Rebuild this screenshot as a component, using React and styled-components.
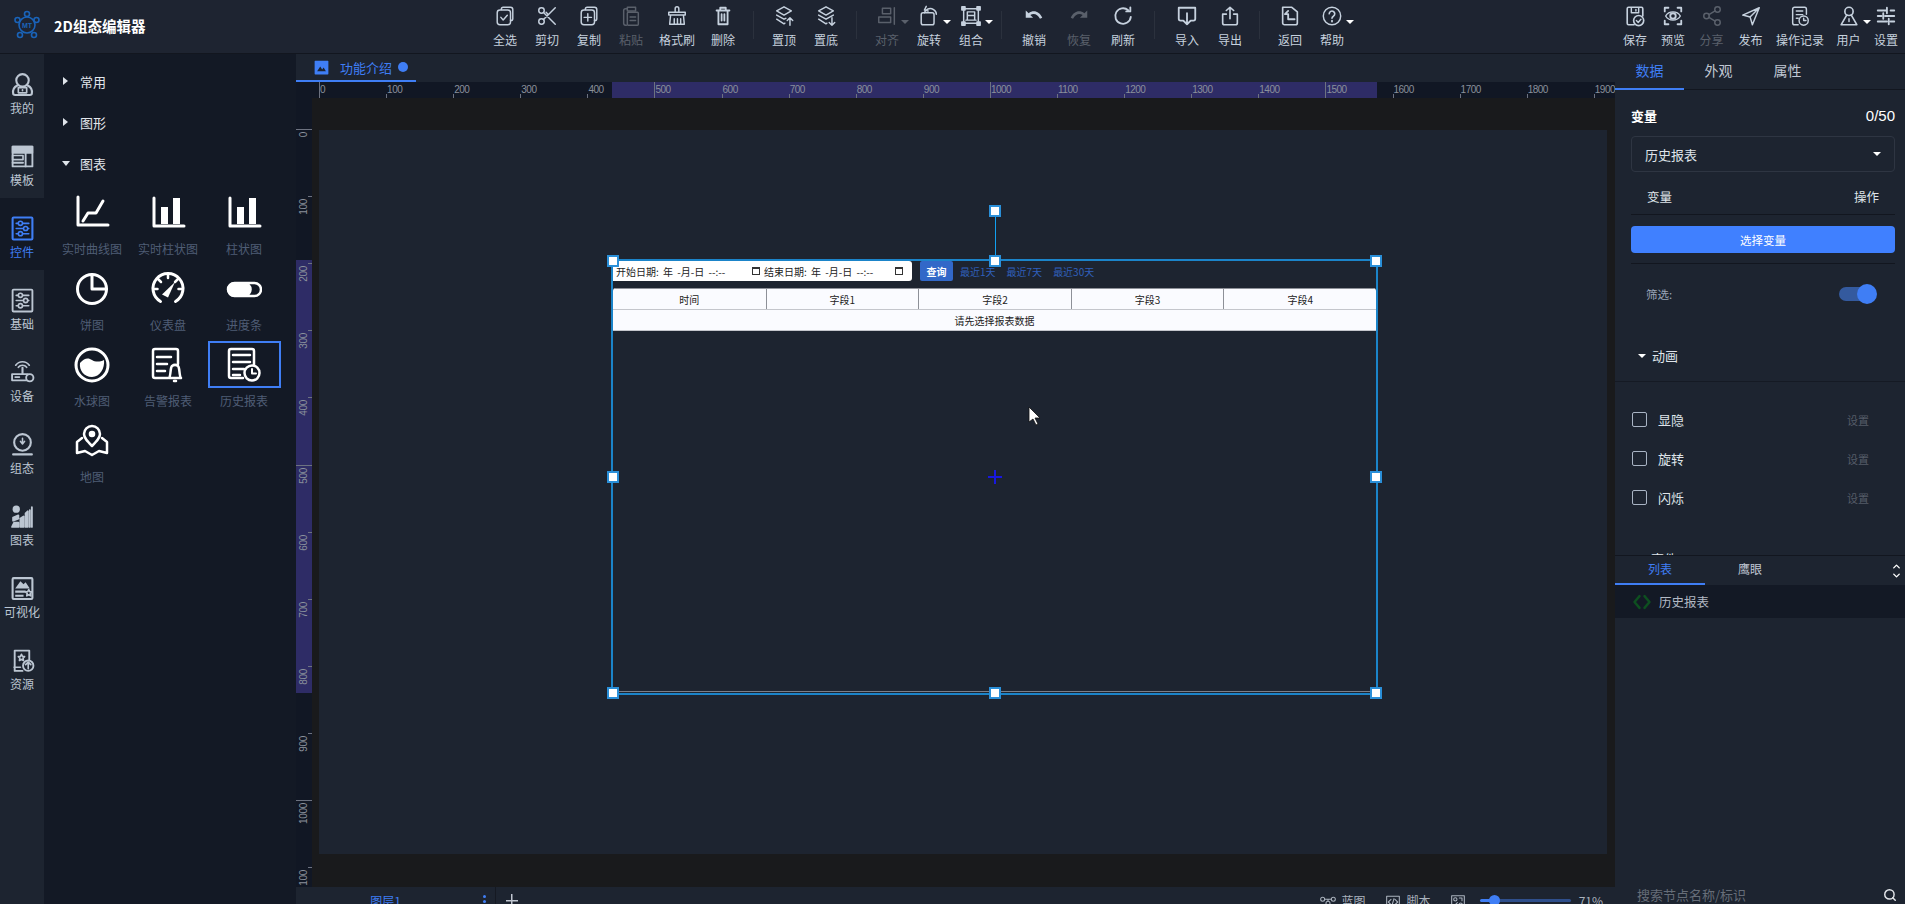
import React from "react";
import styled, { createGlobalStyle } from "styled-components";
import { Search, ChevronUp, ChevronDown } from "lucide-react";

const FONT = `"Noto Sans CJK SC", "Noto Sans", sans-serif`;
const BLUE = "#3f7ef5";
const BG = "#1d2430";
const STEP = 67.1;

const GlobalStyle = createGlobalStyle`
  html, body { margin: 0; padding: 0; height: 904px; overflow: hidden; background: ${BG}; }
  body { font-family: ${FONT}; }
  * { box-sizing: border-box; }
`;

// all the drawn icons, 24x24 box, stroke = currentColor unless filled
const P = {
  selectAll: <><path d="M8 5V4.500a2 2 0 0 1 2-2h8a2.500 2.500 0 0 1 2.500 2.500v10a2 2 0 0 1-2 2H18" /><rect x="3.500" y="5.500" width="14.500" height="16" rx="3" /><path d="M7.500 13.500l2.500 2.800 4.500-5" /></>,
  cut: <><circle cx="6" cy="6" r="3" /><circle cx="6" cy="18" r="3" /><path d="M8.200 8.200L21 21M8.200 15.800L21 3M11 8l2 2M14 14l2 2" /></>,
  copyAdd: <><path d="M8 5V4.500a2 2 0 0 1 2-2h8a2.500 2.500 0 0 1 2.500 2.500v10a2 2 0 0 1-2 2H18" /><rect x="3.500" y="5.500" width="14.500" height="16" rx="3" /><path d="M10.700 9.500v8M6.700 13.500h8" /></>,
  paste: <><path d="M8 4H6a2 2 0 0 0-2 2v14a2 2 0 0 0 2 2h1" /><rect x="8" y="2.500" width="9" height="4" /><rect x="8" y="8" width="12" height="14" rx="1" /><path d="M11 13h6M11 17h6" /></>,
  brush: <><path d="M10 7V4a2 2 0 0 1 4 0v3" /><path d="M3 8h18v3H3zM5 11l-1 10h16l-1-10" /><path d="M9 21v-6M12.500 21v-6M16 21v-6" /></>,
  trash: <><path d="M5 6h14M9 6V3h6v3M7 6v15h10V6" strokeWidth="2" /><path d="M10.500 10v7M13.500 10v7" strokeWidth="2" /></>,
  top: <><path d="M12 2l8 4.500-8 4.500-8-4.500z" /><path d="M4 11l8 4.500 2-1M4 15.500l8 5 1-.6" /><path d="M18.500 22v-8M15.500 17l3-3 3 3" /></>,
  bottom: <><path d="M12 2l8 4.500-8 4.500-8-4.500z" /><path d="M20 11l-8 4.500-8-4.500M4 15.500l8 5 1-.6" /><path d="M18.500 14v8M15.500 19l3 3 3-3" /></>,
  align: <><path d="M20 3v18" /><rect x="7" y="3.500" width="9" height="6" /><rect x="3" y="13" width="13" height="6" /></>,
  rotate: <><rect x="3.500" y="8.500" width="14" height="13" rx="2" /><path d="M7 8.500c1-4 6-6 10-3.500 2 1.200 3 3 3 5M9 1.500l-2 4 4 1" /></>,
  group: <><rect x="4" y="4" width="16" height="16" /><rect x="2" y="2" width="3.500" height="3.500" fill="currentColor" /><rect x="18.500" y="2" width="3.500" height="3.500" fill="currentColor" /><rect x="2" y="18.500" width="3.500" height="3.500" fill="currentColor" /><rect x="18.500" y="18.500" width="3.500" height="3.500" fill="currentColor" /><path d="M8 7.500h8v4H8zM8 11.500v5M16 11.500v5M6.500 16.500h11" /></>,
  undo: <path stroke="none" fill="currentColor" d="M3 6v8h8l-3-3c3.500-2.500 8-1 10.500 4l2.500-1.200C18 6.800 11.200 4.800 6.200 9z" />,
  redo: <path stroke="none" fill="currentColor" d="M21 6v8h-8l3-3c-3.500-2.500-8-1-10.500 4L3 13.800C6 6.800 12.800 4.800 17.800 9z" />,
  refresh: <><path d="M20.500 13a8.500 8.500 0 1 1-2.800-7.300" strokeWidth="2" /><path d="M20 2.500V7h-4.500" strokeWidth="2" /></>,
  importIt: <><path d="M8 17H5a2 2 0 0 1-2-2V3h18v12a2 2 0 0 1-2 2h-3" strokeWidth="2" /><path d="M12 9v12M8.500 17.500l3.500 3.500 3.500-3.500" strokeWidth="2" /></>,
  exportIt: <><path d="M8 10H4v9.500a2 2 0 0 0 2 2h12a2 2 0 0 0 2-2V10h-4" strokeWidth="1.800" /><path d="M12 15V2.500M8 6l4-3.500L16 6" strokeWidth="1.800" /></>,
  back: <><path d="M4 2.500h10l6 5v12a2 2 0 0 1-2 2H6a2 2 0 0 1-2-2z" strokeWidth="1.800" /><path d="M10 6.500l-3.500 3.500H10v5.500h7" strokeWidth="2" /></>,
  help: <><circle cx="12" cy="12" r="9.500" /><path d="M9 9.500a3 3 0 1 1 4.500 2.700c-1 .6-1.500 1.200-1.500 2.300" strokeWidth="1.800" /><path d="M12 17v1" strokeWidth="2" /></>,
  save: <><path d="M5 2.500h14a1.500 1.500 0 0 1 1.500 1.500v8M11 21.500H5A1.500 1.500 0 0 1 3.500 20V4A1.500 1.500 0 0 1 5 2.500" strokeWidth="1.800" /><path d="M8 3v5.500h8V3M13 5v1.500" /><circle cx="16" cy="17" r="5.500" strokeWidth="1.800" /><path d="M13.500 17l2 2 3-3.500" /></>,
  preview: <><path d="M3 7V3h4M17 3h4v4M21 17v4h-4M7 21H3v-4" strokeWidth="2" /><path d="M4 12c3.500-6 12.500-6 16 0-3.500 6-12.500 6-16 0z" /><circle cx="12" cy="12" r="3" strokeWidth="2" /></>,
  share: <><circle cx="18" cy="5" r="3" /><circle cx="6" cy="12" r="3" /><circle cx="18" cy="19" r="3" /><path d="M8.600 10.500l6.800-4M8.600 13.500l6.800 4" /></>,
  send: <path d="M21 3L3 11l8 2 2.500 8.500zM21 3L11 13" />,
  log: <><path d="M10 21.500H6a2 2 0 0 1-2-2v-15a2 2 0 0 1 2-2h11a2 2 0 0 1 2 2V10" /><path d="M8 6.500h7M8 10.500h7M8 14.500h2" /><circle cx="16" cy="17" r="5" /><path d="M16 14.500V17h2.500" /></>,
  user: <><circle cx="12" cy="7" r="4.500" strokeWidth="1.800" /><path d="M9.500 11L3.500 21.500h17L14.500 11" strokeWidth="1.800" /><path d="M12 15v3" /></>,
  settings: <path d="M3 6h10M17 6h4M13 3v6M3 12h4M11 12h10M9 9v6M3 18h10M17 18h4M15 15v6" strokeWidth="2" />,

  rMine: <><circle cx="12" cy="8" r="6" strokeWidth="2" /><path d="M7 13c-3 1.500-4.500 4-4 7.500 0 1 1 1.500 2 1.500h14c1 0 2-.5 2-1.500.5-3.500-1-6-4-7.500" strokeWidth="2" /><rect x="8" y="15" width="8" height="5" /><path d="M12 17v1" /></>,
  rTemplate: <><rect x="2.500" y="2.500" width="19" height="19" strokeWidth="1.800" /><rect x="2.500" y="2.500" width="19" height="6" fill="currentColor" /><rect x="2.500" y="11" width="10" height="4" /><path d="M2.500 18h10M15 8.500v13" strokeWidth="1.800" /></>,
  rControl: <><rect x="2.500" y="1.500" width="19" height="21" rx="1" strokeWidth="2" /><path d="M6 7h12M6 12h12M6 17h12" /><circle cx="10" cy="7" r="2" fill="#131925" strokeWidth="1.500" /><circle cx="15" cy="12" r="2" fill="#131925" strokeWidth="1.500" /><circle cx="10" cy="17" r="2" fill="#131925" strokeWidth="1.500" /></>,
  rBasic: <><rect x="2.500" y="1.500" width="19" height="21" rx="1" strokeWidth="1.800" /><path d="M6 7h12M6 12h12M6 17h12" /><circle cx="10" cy="7" r="2" fill={BG} /><circle cx="15" cy="12" r="2" fill={BG} /><circle cx="10" cy="17" r="2" fill={BG} /></>,
  rDevice: <><path d="M8 7a5 5 0 0 1 8 0M5.500 5a8 8 0 0 1 13 0" /><path d="M12 7.500v6" strokeWidth="2" /><rect x="2" y="13.500" width="15" height="6" strokeWidth="1.800" /><circle cx="19" cy="17" r="3.500" fill={BG} strokeWidth="1.800" /><path d="M5 16.500h4" /></>,
  rConfig: <><circle cx="12" cy="10" r="8" strokeWidth="2" /><path d="M12 6v5M10 9l2 2.500L14 9" strokeWidth="1.500" /><path d="M3 21.500h18" strokeWidth="2" /></>,
  rChart: <><circle cx="6" cy="5" r="3.500" fill="currentColor" stroke="none" /><path d="M3 13l5-2v3l-5 2zM2 22l2-4h4v4zM10 22v-8l3-2v10zM15 22V9l2-2v15zM19 22V6M21 22V3" strokeWidth="1.800" fill="currentColor" /></>,
  rVisual: <><rect x="2.500" y="2" width="19" height="20" rx="1" strokeWidth="2" /><path stroke="none" fill="currentColor" d="M5 12l5-7 3 3 2-2 4 6zM5 14h10v2H5zM5 18h8v2H5z" /><path d="M18 13l1 2 2 .3-1.500 1.500.4 2.200-1.900-1-1.900 1 .4-2.200L15 15.300l2-.3z" fill={BG} /></>,
  rResource: <><path d="M12 22H4.500V2.500h14V11" strokeWidth="1.800" /><path d="M4 18.500h6" /><path d="M11 6l1 2 2 .3-1.500 1.500.4 2.200-1.900-1-1.900 1 .4-2.200L8 8.300l2-.3z" /><circle cx="17.500" cy="17" r="5" strokeWidth="1.800" /><path d="M17.500 20v-6M15 16l2.500-2.500L20 16" /></>,

  wLine: <path d="M4 2v28h30M9 26l5-8h8l7-12M8 31" strokeWidth="3" />,
  wRealBar: <><path d="M4 3v28h30" strokeWidth="3" /><rect x="11" y="12" width="7" height="17" fill="currentColor" stroke="none" /><rect x="23" y="3" width="7" height="26" fill="currentColor" stroke="none" /></>,
  wBar: <><path d="M4 3v28h30" strokeWidth="3" /><rect x="11" y="12" width="7" height="17" fill="currentColor" stroke="none" /><rect x="23" y="3" width="7" height="26" fill="currentColor" stroke="none" /></>,
  wPie: <><path d="M18 3.500a14.500 14.500 0 1 0 14.500 14.500H18z" strokeWidth="3" /><path d="M18 3.500a14.500 14.500 0 0 1 14.500 14.500" strokeWidth="3" /></>,
  wGauge: <><path d="M10.500 30.500a15 15 0 1 1 15 0" strokeWidth="3" /><path d="M18 3v4M3.500 18h4M28.500 18h4M8 8l3 3M28 8l-3 3" strokeWidth="2.500" /><path d="M12 23.500L25 11l-7 15.500z" fill="currentColor" stroke="none" /></>,
  wToggle: <><rect x="2" y="12" width="33" height="13" rx="6.500" strokeWidth="2.500" /><rect x="2" y="12" width="23" height="13" rx="6.500" fill="currentColor" /></>,
  wLiquid: <><circle cx="18" cy="18" r="16" strokeWidth="3" /><path stroke="none" fill="currentColor" d="M6 16c5-6 9-5 12-3s8 2 12 0c1 8-4 17-12 17S5 23 6 16z" /></>,
  wAlarm: <><path d="M18 31H5a2 2 0 0 1-2-2V4a2 2 0 0 1 2-2h21a2 2 0 0 1 2 2v13" strokeWidth="2.500" /><path d="M7 10h14M7 17h10M7 24h8" strokeWidth="2.500" /><path d="M19 31c2-2 1-10 3-12a5 5 0 0 1 6 0c2 2 1 10 3 12zM24 34h2" strokeWidth="2.500" /></>,
  wHistory: <><path d="M17 31H5a2 2 0 0 1-2-2V4a2 2 0 0 1 2-2h21a2 2 0 0 1 2 2v14" strokeWidth="2.500" /><path d="M7 8h17M7 15h17M7 22h11M7 28h7" strokeWidth="2.500" /><circle cx="26" cy="26" r="7.500" strokeWidth="2.500" /><path d="M26 22v4.500h4" strokeWidth="2" /></>,
  wMap: <><path d="M18 23c-5-5-8-8-8-12a8 8 0 0 1 16 0c0 4-3 7-8 12z" strokeWidth="2.500" /><circle cx="18" cy="11" r="2.500" fill="currentColor" /><path d="M8 15l-5 4v11l8-2 7 4 7-4 8 2V19l-5-4" strokeWidth="2.500" /></>,

  blueprint: <><circle cx="4" cy="8" r="3" /><circle cx="20" cy="8" r="3" /><circle cx="12" cy="14" r="3" /><path d="M7 8h10M12 8v3" /></>,
  script: <><rect x="2.500" y="3.500" width="19" height="17" /><path d="M9 8l-4 4 4 4M15 8l4 4-4 4M13.500 7l-3 10" /></>,
  fit: <><rect x="2.500" y="2.500" width="19" height="19" /><circle cx="8" cy="8" r="2.500" /><circle cx="16" cy="16" r="2.500" /><path d="M11 13l-5 5M14 6h4v4" /></>,
  code: <path d="M9 5l-6 7 6 7M15 5l6 7-6 7M9 5" strokeWidth="3" />,
  tabPic: <path stroke="none" fill="currentColor" fillRule="evenodd" d="M2 1h20a1 1 0 0 1 1 1v20a1 1 0 0 1-1 1H2a1 1 0 0 1-1-1V2a1 1 0 0 1 1-1zM5 18h14l-3.500-6-2.500 3-3-4.500z" />,
};

const IconSvg = styled.svg`
  display: block;
  flex: none;
  width: ${(p) => p.$size}px;
  height: ${(p) => p.$size}px;
  color: ${(p) => p.$color || "currentColor"};
  fill: none;
  stroke: currentColor;
  stroke-width: ${(p) => p.$sw || 1.6};
  stroke-linecap: round;
  stroke-linejoin: round;
`;

const Ic = ({ n, size = 22, box = 24, color, sw }) => (
  <IconSvg viewBox={`0 0 ${box} ${box}`} $size={size} $color={color} $sw={sw}>
    {P[n]}
  </IconSvg>
);

/* ---------- header ---------- */
const Page = styled.div`
  width: 1905px;
  height: 904px;
  display: flex;
  flex-direction: column;
  overflow: hidden;
  background: ${BG};
`;
const Header = styled.header`
  flex: 0 0 54px;
  display: flex;
  border-bottom: 1px solid #12161f;
  background: #1e2431;
`;
const Brand = styled.div`
  flex: 0 0 484px;
  display: flex;
  align-items: center;
  padding: 0 0 3px 14px;
  gap: 14px;
`;
const Title = styled.div`
  color: #fff;
  font-size: 14.5px;
  font-weight: 700;
`;
const Tools = styled.div`
  flex: 1;
  display: flex;
`;
const ToolBtn = styled.div`
  position: relative;
  width: ${(p) => p.$w || 42}px;
  display: flex;
  flex-direction: column;
  align-items: center;
  padding-top: 5px;
  color: ${(p) => (p.$off ? "#5a606b" : "#c6d1de")};
  span {
    margin-top: 5px;
    font-size: 12px;
    line-height: 16px;
    white-space: nowrap;
  }
`;
const Caret = styled.i`
  flex: none;
  width: 0;
  height: 0;
  border-left: 4px solid transparent;
  border-right: 4px solid transparent;
  border-top: 4px solid ${(p) => p.$color || "#fff"};
`;
const ToolCaret = styled(Caret)`
  position: absolute;
  top: 20px;
  left: calc(50% + 14px);
`;
const Sep = styled.div`
  width: 1px;
  height: 28px;
  margin: 11px 9px 0;
  background: #2b313d;
`;
const RightTools = styled.div`
  margin-left: auto;
  display: flex;
`;

const Tool = ({ icon, label, w, off, caret, size }) => (
  <ToolBtn $w={w} $off={off}>
    <Ic n={icon} size={size || 22} />
    <span>{label}</span>
    {caret && <ToolCaret $color={off ? "#5a606b" : "#fff"} />}
  </ToolBtn>
);

const Logo = () => (
  <svg width="26" height="30" viewBox="0 0 26 30" fill="none" stroke="#1a63b8" strokeWidth="1.6">
    <circle cx="13" cy="15" r="8" />
    <circle cx="13" cy="4" r="2.500" />
    <circle cx="3.500" cy="10" r="2.500" />
    <circle cx="22.500" cy="10" r="2.500" />
    <circle cx="6" cy="25" r="2.500" />
    <circle cx="20" cy="25" r="2.500" />
    <text x="13" y="18" fontSize="7" fill="#1a63b8" stroke="none" textAnchor="middle" fontFamily="Liberation Sans" fontWeight="700">MT</text>
  </svg>
);

/* ---------- left rail and widgets ---------- */
const Body = styled.div`
  flex: 1;
  display: flex;
  min-height: 0;
`;
const Rail = styled.nav`
  flex: 0 0 44px;
  background: ${BG};
`;
const RailItem = styled.div`
  height: 72px;
  display: flex;
  flex-direction: column;
  align-items: center;
  padding-top: 18px;
  background: ${(p) => (p.$on ? "#131925" : "transparent")};
  color: ${(p) => (p.$on ? BLUE : "#bcc6d2")};
  span {
    margin-top: 3px;
    font-size: 12px;
    line-height: 16px;
    white-space: nowrap;
  }
`;
const Palette = styled.aside`
  flex: 0 0 252px;
  padding: 7px 0 0 10px;
  background: #131925;
`;
const Group = styled.div`
  position: relative;
  height: 41px;
  display: flex;
  align-items: center;
  padding-left: 26px;
  color: #e2e6ec;
  font-size: 13px;
`;
const GroupArrow = styled.i`
  position: absolute;
  left: 9px;
  top: 16px;
  width: 0;
  height: 0;
  ${(p) =>
    p.$open
      ? `border-left:4px solid transparent;border-right:4px solid transparent;border-top:5px solid #dfe4ea;left:8px;top:18px;`
      : `border-top:4px solid transparent;border-bottom:4px solid transparent;border-left:5px solid #dfe4ea;`}
`;
const WidgetGrid = styled.div`
  margin-top: 5px;
  display: grid;
  grid-template-columns: repeat(3, 76px);
  grid-auto-rows: 76px;
`;
const Widget = styled.div`
  display: flex;
  flex-direction: column;
  align-items: center;
  color: #4f5d75;
  font-size: 12px;
  line-height: 18px;
  white-space: nowrap;
`;
const WidgetIcon = styled.div`
  width: 73px;
  height: 47px;
  margin-bottom: 4px;
  display: flex;
  align-items: center;
  justify-content: center;
  color: #fff;
  border: 2px solid ${(p) => (p.$on ? BLUE : "transparent")};
`;

/* ---------- center ---------- */
const Center = styled.main`
  flex: 0 0 1319px;
  display: flex;
  flex-direction: column;
  background: #191a1c;
  min-width: 0;
`;
const TabBar = styled.div`
  flex: 0 0 28px;
  background: ${BG};
`;
const DocTab = styled.div`
  width: 120px;
  height: 28px;
  display: flex;
  align-items: center;
  padding-left: 18px;
  gap: 11px;
  color: ${BLUE};
  font-size: 13px;
  border-bottom: 2px solid ${BLUE};
  em {
    width: 10px;
    height: 10px;
    margin-left: -5px;
    border-radius: 50%;
    background: ${BLUE};
  }
`;
const HRuler = styled.div`
  position: relative;
  flex: 0 0 16px;
  display: flex;
  padding-left: 23px;
  overflow: hidden;
  background: #111724;
`;
const HSpan = styled.div`
  position: absolute;
  left: 316px;
  top: 0;
  width: 765px;
  height: 16px;
  background: #2e2c66;
`;
const HTick = styled.div`
  position: relative;
  flex: 0 0 ${STEP}px;
  height: 16px;
  color: #8a909b;
  font-family: "Liberation Sans", sans-serif;
  font-size: 10px;
  letter-spacing: -0.5px;
  line-height: 16px;
  padding-left: 1px;
  &::before {
    content: "";
    position: absolute;
    left: 0;
    bottom: 0;
    width: 1px;
    height: ${(p) => (p.$major ? 16 : 4)}px;
    background: #6d7280;
  }
`;
const CanvasRow = styled.div`
  flex: 1;
  display: flex;
  min-height: 0;
`;
const VRuler = styled.div`
  position: relative;
  flex: 0 0 16px;
  overflow: hidden;
  background: #111724;
`;
const VSpan = styled.div`
  position: absolute;
  left: 0;
  top: 162px;
  width: 16px;
  height: 433px;
  background: #2e2c66;
`;
const VTick = styled.div`
  position: absolute;
  left: 0;
  width: 16px;
  top: ${(p) => p.$y}px;
  color: #8a909b;
  font-family: "Liberation Sans", sans-serif;
  font-size: 10px;
  letter-spacing: -0.3px;
  &::before {
    content: "";
    position: absolute;
    right: 0;
    top: 0;
    height: 1px;
    width: ${(p) => (p.$major ? 16 : 4)}px;
    background: #6d7280;
  }
  b {
    position: absolute;
    font-weight: 400;
    top: 3px;
    left: 2px;
    line-height: 12px;
    writing-mode: vertical-rl;
    transform: rotate(180deg);
  }
`;
const Canvas = styled.div`
  position: relative;
  flex: 0 0 1288px;
  height: 724px;
  margin: 32px 0 0 7px;
  background: ${BG};
`;
const Frame = styled.div`
  position: absolute;
  left: 292px;
  top: 129px;
  width: 767px;
  height: 436px;
  border: 2px solid #1b84c9;
`;
const Handle = styled.i`
  position: absolute;
  width: 12px;
  height: 12px;
  left: ${(p) => p.$x}%;
  top: ${(p) => p.$y}%;
  margin: -6px 0 0 -6px;
  background: #fff;
  border: 2px solid #2a8fd8;
`;
const RotateLine = styled.i`
  position: absolute;
  left: 50%;
  top: -50px;
  width: 1px;
  height: 50px;
  background: #12a0f0;
`;
const RotateHandle = styled(Handle)`
  left: 50%;
  top: -50px;
`;
const Cross = styled.div`
  position: absolute;
  left: 50%;
  top: 50%;
  margin: -7px 0 0 -7px;
  width: 14px;
  height: 14px;
  background:
    linear-gradient(#1818e0, #1818e0) center / 14px 2px no-repeat,
    linear-gradient(#1818e0, #1818e0) center / 2px 14px no-repeat;
`;
const Pointer = styled.svg`
  position: absolute;
  left: 415px;
  top: 145px;
`;
const WidgetBottom = styled.div`
  position: absolute;
  left: 0;
  right: 0;
  bottom: 1px;
  height: 1px;
  background: #7c808a;
`;
const Report = styled.div`
  color: #222;
  font-size: 10px;
`;
const QueryBar = styled.div`
  display: flex;
  align-items: center;
  height: 20px;
`;
const DateBox = styled.div`
  flex: 0 0 299px;
  height: 20px;
  display: flex;
  align-items: center;
  padding: 0 3px 0 3px;
  background: #fff;
  border-radius: 0 3px 3px 0;
`;
const DateField = styled.div`
  flex: 0 0 ${(p) => p.$w}px;
  display: flex;
  justify-content: space-between;
  align-items: center;
  white-space: nowrap;
  word-spacing: 2px;
  padding-right: 4px;
`;
const CalIcon = styled.i`
  position: relative;
  width: 8px;
  height: 8px;
  border: 1px solid #333;
  border-top-width: 2px;
`;
const QueryBtn = styled.div`
  margin: 0 7px 0 8px;
  width: 33px;
  height: 20px;
  display: flex;
  align-items: center;
  justify-content: center;
  border-radius: 2px;
  background: #3268c8;
  color: #fff;
  font-weight: 700;
`;
const Range = styled.div`
  margin-right: 11px;
  color: #3060bc;
  white-space: nowrap;
`;
const Table = styled.div`
  margin-top: 7px;
  border-radius: 3px 3px 0 0;
  background: #fafbff;
  overflow: hidden;
`;
const THead = styled.div`
  display: grid;
  grid-template-columns: repeat(5, 1fr);
  height: 22px;
  border-top: 1px solid #8d9098;
  border-bottom: 1px solid #c4c6cc;
`;
const TH = styled.div`
  display: flex;
  align-items: center;
  justify-content: center;
  border-left: ${(p) => (p.$first ? "0" : "1px solid #8d9098")};
`;
const TEmpty = styled.div`
  height: 21px;
  display: flex;
  align-items: center;
  justify-content: center;
  border-bottom: 1px solid #c4c6cc;
`;
const BottomBar = styled.div`
  flex: 0 0 17px;
  height: 17px;
  overflow: hidden;
  display: flex;
  background: ${BG};
  color: #aab2bd;
  font-size: 12px;
  line-height: 16px;
`;
const LayerTab = styled.div`
  position: relative;
  flex: 0 0 200px;
  padding: 6px 20px 0 0;
  text-align: center;
  color: ${BLUE};
  border-right: 1px solid #151922;
  i {
    position: absolute;
    left: 187px;
    top: 8px;
    width: 3px;
    height: 3px;
    border-radius: 50%;
    background: ${BLUE};
    box-shadow: 0 5px 0 ${BLUE};
  }
`;
const AddLayer = styled.div`
  margin-left: 10px;
  padding-top: 6px;
  width: 12px;
  height: 17px;
  background:
    linear-gradient(#c0c6d0, #c0c6d0) center 13px / 12px 1.5px no-repeat,
    linear-gradient(#c0c6d0, #c0c6d0) center 7px / 1.5px 12px no-repeat;
`;
const Status = styled.div`
  margin-left: auto;
  padding: 6px 12px 0 0;
  display: flex;
  align-items: flex-start;
`;
const StatusItem = styled.div`
  display: flex;
  align-items: flex-start;
  gap: 6px;
  margin-right: 19px;
  svg {
    margin-top: 1px;
  }
`;
const FitItem = styled(StatusItem)`
  margin-right: 14px;
`;
const ZoomSlider = styled.div`
  position: relative;
  width: 91px;
  height: 3px;
  margin: 6px 8px 0 0;
  border-radius: 2px;
  background: linear-gradient(90deg, ${BLUE} 15%, #2f4f8c 15%);
  &::after {
    content: "";
    position: absolute;
    left: 9px;
    top: -4px;
    width: 11px;
    height: 11px;
    border-radius: 50%;
    background: ${BLUE};
  }
`;

/* ---------- right panel ---------- */
const Side = styled.aside`
  flex: 0 0 290px;
  display: flex;
  flex-direction: column;
  background: ${BG};
  min-height: 0;
`;
const PropsPane = styled.div`
  flex: 0 0 501px;
  overflow: hidden;
`;
const SideTabs = styled.div`
  height: 36px;
  display: flex;
  border-bottom: 1px solid #12161f;
`;
const SideTab = styled.div`
  width: ${(p) => p.$w || 69}px;
  height: ${(p) => (p.$sm ? 29 : 36)}px;
  display: flex;
  align-items: center;
  justify-content: center;
  padding-bottom: 2px;
  color: ${(p) => (p.$on ? BLUE : "#c0c8d4")};
  font-size: ${(p) => (p.$sm ? 12 : 14)}px;
  border-bottom: 2px solid ${(p) => (p.$on ? BLUE : "transparent")};
`;
const Section = styled.div`
  padding: 0 10px 0 16px;
`;
const VarHead = styled.div`
  display: flex;
  justify-content: space-between;
  align-items: center;
  height: 46px;
  padding-top: 4px;
  color: #fff;
  font-size: 13px;
  font-weight: 700;
  span {
    font-weight: 400;
    font-size: 15px;
    font-family: "Liberation Sans", sans-serif;
  }
`;
const Select = styled.div`
  height: 36px;
  display: flex;
  align-items: center;
  justify-content: space-between;
  padding: 0 13px;
  border: 1px solid #2e3542;
  border-radius: 4px;
  color: #dfe4ea;
  font-size: 13px;
`;
const VarTable = styled.div`
  height: 43px;
  display: flex;
  justify-content: space-between;
  align-items: center;
  padding: 6px 16px 0;
  margin-bottom: 11px;
  border-bottom: 1px solid #12161f;
  color: #dfe4ea;
  font-size: 12.5px;
`;
const PickBtn = styled.div`
  height: 27px;
  display: flex;
  align-items: center;
  justify-content: center;
  border-radius: 4px;
  background: #4080ff;
  color: #fff;
  font-size: 11.5px;
`;
const Rule = styled.div`
  margin-top: 10px;
  height: 1px;
  background: #12161f;
`;
const FilterRow = styled.div`
  height: 62px;
  display: flex;
  justify-content: space-between;
  align-items: center;
  padding: 0 19px 2px 15px;
  color: #9aa5b8;
  font-size: 11.5px;
`;
const Toggle = styled.div`
  position: relative;
  width: 37px;
  height: 14px;
  border-radius: 7px;
  background: #345a9e;
  &::after {
    content: "";
    position: absolute;
    right: -1px;
    top: -3px;
    width: 20px;
    height: 20px;
    border-radius: 50%;
    background: ${BLUE};
  }
`;
const Collapse = styled.div`
  height: 48px;
  margin-top: 8px;
  display: flex;
  align-items: center;
  gap: 6px;
  padding: 0 0 4px 23px;
  color: #dfe4ea;
  font-size: 13px;
  border-bottom: 1px solid #151a24;
`;
const AnimList = styled.div`
  padding: 18px 36px 0 17px;
`;
const AnimRow = styled.div`
  height: 39px;
  display: flex;
  align-items: center;
  color: #dfe4ea;
  font-size: 13px;
  em {
    margin-left: auto;
    font-style: normal;
    font-size: 11px;
    color: #555c68;
  }
`;
const Check = styled.i`
  width: 15px;
  height: 15px;
  margin-right: 11px;
  border: 1.5px solid #a9b4c4;
  border-radius: 2px;
`;
const EventHead = styled.div`
  margin: 32px 0 0 36px;
  color: #dfe4ea;
  font-size: 13px;
`;
const TreeTabs = styled.div`
  position: relative;
  display: flex;
  border-top: 1px solid #12161f;
  height: 30px;
`;
const Spinner = styled.div`
  position: absolute;
  right: 3px;
  top: 7px;
  display: flex;
  flex-direction: column;
  color: #fff;
  svg {
    margin-top: -2px;
  }
`;
const TreeRow = styled.div`
  height: 33px;
  display: flex;
  align-items: center;
  gap: 7px;
  padding-left: 17px;
  background: #131925;
  color: #b2b9c4;
  font-size: 12.5px;
`;
const TreeSpace = styled.div`
  flex: 1;
`;
const SearchRow = styled.div`
  flex: 0 0 22px;
  display: flex;
  justify-content: space-between;
  align-items: flex-start;
  padding: 4px 8px 0 22px;
  color: #666d78;
  font-size: 13px;
  line-height: 18px;
  svg {
    color: #e3e6ea;
    margin-top: 2px;
  }
`;

const railItems = [
  ["rMine", "我的"],
  ["rTemplate", "模板"],
  ["rControl", "控件", true],
  ["rBasic", "基础"],
  ["rDevice", "设备"],
  ["rConfig", "组态"],
  ["rChart", "图表"],
  ["rVisual", "可视化"],
  ["rResource", "资源"],
];

const widgets = [
  ["wLine", "实时曲线图"],
  ["wRealBar", "实时柱状图"],
  ["wBar", "柱状图"],
  ["wPie", "饼图"],
  ["wGauge", "仪表盘"],
  ["wToggle", "进度条"],
  ["wLiquid", "水球图"],
  ["wAlarm", "告警报表"],
  ["wHistory", "历史报表", true],
  ["wMap", "地图"],
];

const handles = [
  [0, 0], [50, 0], [100, 0],
  [0, 50], [100, 50],
  [0, 100], [50, 100], [100, 100],
];

const App = () => (
  <Page>
    <GlobalStyle />
    <Header>
      <Brand>
        <Logo />
        <Title>2D组态编辑器</Title>
      </Brand>
      <Tools>
        <Tool icon="selectAll" label="全选" />
        <Tool icon="cut" label="剪切" />
        <Tool icon="copyAdd" label="复制" />
        <Tool icon="paste" label="粘贴" off />
        <Tool icon="brush" label="格式刷" w={50} />
        <Tool icon="trash" label="删除" />
        <Sep />
        <Tool icon="top" label="置顶" />
        <Tool icon="bottom" label="置底" />
        <Sep />
        <Tool icon="align" label="对齐" off caret />
        <Tool icon="rotate" label="旋转" caret />
        <Tool icon="group" label="组合" caret />
        <Sep />
        <Tool icon="undo" label="撤销" w={46} />
        <Tool icon="redo" label="恢复" w={44} off />
        <Tool icon="refresh" label="刷新" w={44} />
        <Sep />
        <Tool icon="importIt" label="导入" w={46} />
        <Tool icon="exportIt" label="导出" w={40} />
        <Sep />
        <Tool icon="back" label="返回" />
        <Tool icon="help" label="帮助" caret />
        <RightTools>
          <Tool icon="save" label="保存" w={38} />
          <Tool icon="preview" label="预览" w={38} />
          <Tool icon="share" label="分享" w={39} off />
          <Tool icon="send" label="发布" w={39} />
          <Tool icon="log" label="操作记录" w={60} />
          <Tool icon="user" label="用户" w={37} caret />
          <Tool icon="settings" label="设置" w={38} />
        </RightTools>
      </Tools>
    </Header>
    <Body>
      <Rail>
        {railItems.map(([icon, label, on]) => (
          <RailItem key={label} $on={on}>
            <Ic n={icon} size={25} />
            <span>{label}</span>
          </RailItem>
        ))}
      </Rail>
      <Palette>
        <Group><GroupArrow />常用</Group>
        <Group><GroupArrow />图形</Group>
        <Group><GroupArrow $open />图表</Group>
        <WidgetGrid>
          {widgets.map(([icon, label, on]) => (
            <Widget key={label}>
              <WidgetIcon $on={on}>
                <Ic n={icon} size={36} box={36} />
              </WidgetIcon>
              {label}
            </Widget>
          ))}
        </WidgetGrid>
      </Palette>
      <Center>
        <TabBar>
          <DocTab>
            <Ic n="tabPic" size={15} />
            功能介绍
            <em />
          </DocTab>
        </TabBar>
        <HRuler>
          <HSpan />
          {Array.from({ length: 20 }, (_, i) => (
            <HTick key={i} $major={i % 5 === 0}>{i * 100}</HTick>
          ))}
        </HRuler>
        <CanvasRow>
          <VRuler>
            <VSpan />
            {Array.from({ length: 12 }, (_, i) => (
              <VTick key={i} $y={31 + i * STEP} $major={i % 5 === 0}>
                <b>{i === 11 ? "100" : i * 100}</b>
              </VTick>
            ))}
          </VRuler>
          <Canvas>
            <Frame>
              <RotateLine />
              <RotateHandle $x={50} $y={0} />
              <Report>
                <QueryBar>
                  <DateBox>
                    <DateField $w={148}>
                      开始日期: 年 -月-日 --:--
                      <CalIcon />
                    </DateField>
                    <DateField $w={143}>
                      结束日期: 年 -月-日 --:--
                      <CalIcon />
                    </DateField>
                  </DateBox>
                  <QueryBtn>查询</QueryBtn>
                  <Range>最近1天</Range>
                  <Range>最近7天</Range>
                  <Range>最近30天</Range>
                </QueryBar>
                <Table>
                  <THead>
                    <TH $first>时间</TH>
                    <TH>字段1</TH>
                    <TH>字段2</TH>
                    <TH>字段3</TH>
                    <TH>字段4</TH>
                  </THead>
                  <TEmpty>请先选择报表数据</TEmpty>
                </Table>
              </Report>
              <WidgetBottom />
              <Cross />
              {handles.map(([x, y]) => (
                <Handle key={`${x}-${y}`} $x={x} $y={y} />
              ))}
              <Pointer width="14" height="20" viewBox="0 0 14 20">
                <path d="M1 1v15l4-3 3 6 2-1-3-6h5z" fill="#fff" stroke="#111" strokeWidth="0.8" />
              </Pointer>
            </Frame>
          </Canvas>
        </CanvasRow>
        <BottomBar>
          <LayerTab>图层1<i /></LayerTab>
          <AddLayer />
          <Status>
            <StatusItem><Ic n="blueprint" size={16} />蓝图</StatusItem>
            <StatusItem><Ic n="script" size={16} />脚本</StatusItem>
            <FitItem><Ic n="fit" size={16} /></FitItem>
            <ZoomSlider />
            71%
          </Status>
        </BottomBar>
      </Center>
      <Side>
        <PropsPane>
          <SideTabs>
            <SideTab $on>数据</SideTab>
            <SideTab>外观</SideTab>
            <SideTab>属性</SideTab>
          </SideTabs>
          <Section>
            <VarHead>变量<span>0/50</span></VarHead>
            <Select>历史报表<Caret /></Select>
            <VarTable><div>变量</div><div>操作</div></VarTable>
            <PickBtn>选择变量</PickBtn>
            <Rule />
            <FilterRow>筛选:<Toggle /></FilterRow>
          </Section>
          <Collapse><Caret />动画</Collapse>
          <AnimList>
            {["显隐", "旋转", "闪烁"].map((label) => (
              <AnimRow key={label}><Check />{label}<em>设置</em></AnimRow>
            ))}
          </AnimList>
          <EventHead>事件</EventHead>
        </PropsPane>
        <TreeTabs>
          <SideTab $w={90} $sm $on>列表</SideTab>
          <SideTab $w={90} $sm>鹰眼</SideTab>
          <Spinner>
            <ChevronUp size={11} strokeWidth={3} />
            <ChevronDown size={11} strokeWidth={3} />
          </Spinner>
        </TreeTabs>
        <TreeRow>
          <Ic n="code" size={20} color="#0e4f20" />
          历史报表
        </TreeRow>
        <TreeSpace />
        <SearchRow>
          搜索节点名称/标识
          <Search size={14} strokeWidth={2.5} />
        </SearchRow>
      </Side>
    </Body>
  </Page>
);

export default App;
